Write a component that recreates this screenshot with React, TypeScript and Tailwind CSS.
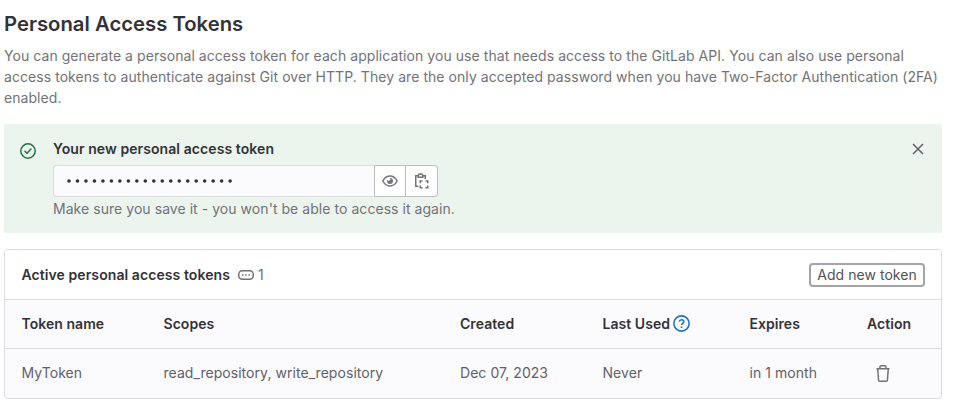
import React from "react";

const stroke = { fill: "none", stroke: "currentColor", strokeWidth: 1.5 } as const;

function CheckCircle() {
  return (
    <svg viewBox="0 0 16 16" className="h-4 w-4 text-[#217645]" {...stroke}>
      <circle cx="8" cy="8" r="7.2" />
      <path d="M5 8.2l2 2 4-4.1" strokeLinecap="round" strokeLinejoin="round" />
    </svg>
  );
}

function Eye() {
  return (
    <svg viewBox="0 0 16 16" className="h-4 w-4" {...stroke}>
      <path d="M.8 8C2.6 4.7 5 3 8 3s5.400 1.700 7.200 5C13.400 11.300 11 13 8 13S2.600 11.300.8 8z" strokeLinejoin="round" />
      <path d="M8 5a3 3 0 1 1-3 3c0-.4.1-.7.200-1A1.500 1.500 0 0 0 8 5z" fill="currentColor" stroke="none" />
    </svg>
  );
}

function CopyToClipboard() {
  return (
    <svg viewBox="0 0 16 16" className="h-4 w-4" {...stroke}>
      <path d="M4.500 2.750H1.750v10.500H4.500M9 2.750h2.250V6" />
      <path d="M4.250 4.250v-2L5.250.9h2.500l1 1.350v2z" />
      <path d="M6.250 10.250V8H8.500M11.500 8h2.250v2.250M13.750 12.500v2.250H11.500M8.500 14.750H6.250V12.500" />
    </svg>
  );
}

function Trash() {
  return (
    <svg viewBox="0 0 16 17" className="h-[17px] w-4" {...stroke}>
      <path d="M1.500 3.750h13M5 3.500V1.750a1 1 0 0 1 1-1h4a1 1 0 0 1 1 1V3.500M2.750 4l.8 11a1.300 1.300 0 0 0 1.300 1.250h6.300A1.300 1.300 0 0 0 12.450 15l.8-11" />
    </svg>
  );
}

const cols = "grid grid-cols-[142px_296.500px_142.500px_147px_117.500px_1fr] items-center pl-[16.500px]";

export default function App() {
  return (
    <div className="flex h-[414px] w-[955px] flex-col bg-white pl-1 pr-[13px] pt-[9px] font-[Inter,sans-serif] text-[14px] tracking-[0.050px] text-[#737278]">
      <h1 className="h-[30px] text-[20.300px] leading-[30px] font-[580] tracking-normal text-[#333238]">Personal Access Tokens</h1>
      <p className="mt-[6px] h-[63px] leading-[21px] tracking-[0.060px]">
        You can generate a personal access token for each application you use that needs access to the GitLab API. You can also use personal<br />
        access tokens to authenticate against Git over HTTP. They are the only accepted password when you have Two-Factor Authentication (2FA)<br />
        enabled.
      </p>
      <section className="mt-4 flex h-[109px] bg-[#ecf4ee] pl-4 pr-[18px]">
        <div className="w-[33px] pt-[19px]"><CheckCircle /></div>
        <div className="flex-1 pt-[15px]">
          <h2 className="h-[26px] leading-5 font-[580] tracking-[0.080px] text-[#333238]">Your new personal access token</h2>
          <div className="flex h-8 w-[385px]">
            <div className="flex w-[321px] items-center rounded-l border border-r-0 border-[#dcdcde] bg-[#fbfafd] pl-[13px]">
              <svg viewBox="0 0 170 8" className="h-2 w-[170px] text-[#333238]" fill="currentColor">
                {Array.from({ length: 20 }, (_, i) => (
                  <circle key={i} cx={2 + i * 8.48} cy="4" r="1.8" />
                ))}
              </svg>
            </div>
            <button className="flex w-8 items-center justify-center border border-[#bfbfc3] bg-white"><Eye /></button>
            <button className="flex w-8 items-center justify-center rounded-r border border-l-0 border-[#bfbfc3] bg-white"><CopyToClipboard /></button>
          </div>
          <p className="pt-[2px] leading-5">Make sure you save it - you won't be able to access it again.</p>
        </div>
        <button className="mt-[19px] h-3 w-3 self-start text-[#626168]">
          <svg viewBox="0 0 12 12" className="h-3 w-3" {...stroke}><path d="M1 1l10 10M11 1L1 11" /></svg>
        </button>
      </section>
      <section className="mt-4 h-[150px] overflow-hidden rounded border border-[#dcdcde] bg-[#fbfafd]">
        <header className="flex h-[50px] items-center border-b border-[#dcdcde] bg-white pr-4 pl-[16.500px]">
          <h2 className="font-[580] tracking-[0.080px] text-[#333238]">Active personal access tokens</h2>
          <svg viewBox="0 0 16 16" className="ml-2 h-4 w-4" {...stroke}>
            <rect x=".75" y="3.750" width="14.500" height="8.500" rx="3.500" />
            <path d="M4 8h1.500M7.250 8h1.500M10.500 8H12" />
          </svg>
          <span className="ml-1">1</span>
          <button className="ml-auto h-6 w-[116px] rounded border-2 border-[#a4a3a8] bg-white leading-5 text-[#535158]">Add new token</button>
        </header>
        <div className={cols + " h-[49px] border-b border-[#dcdcde] pb-px font-[580] text-[#333238]"}>
          <span>Token name</span>
          <span>Scopes</span>
          <span>Created</span>
          <span className="flex items-center">
            Last Used
            <svg viewBox="0 0 16 16" className="ml-[3px] h-[17px] w-[17px] text-[#1f75cb]" {...stroke}>
              <circle cx="8" cy="8" r="7.200" />
              <path d="M5.900 6.300A2.100 2.100 0 0 1 8 4.500c1.200 0 2.100.7 2.100 1.800 0 1.500-2.100 1.500-2.100 3.200" />
              <path d="M8 10.700v1.600" />
            </svg>
          </span>
          <span>Expires</span>
          <span>Action</span>
        </div>
        <div className={cols + " h-[49px] pb-[2px] text-[#626168]"}>
          <span>MyToken</span>
          <span>read_repository, write_repository</span>
          <span>Dec 07, 2023</span>
          <span>Never</span>
          <span>in 1 month</span>
          <button className="pl-2 pt-px text-[#737278]"><Trash /></button>
        </div>
      </section>
    </div>
  );
}
